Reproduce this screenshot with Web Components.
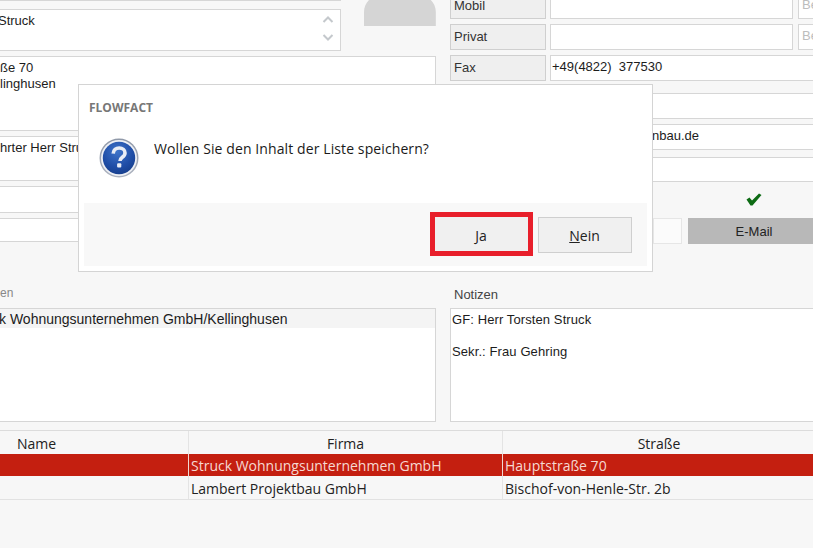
<!DOCTYPE html>
<html lang="de">
<head>
<meta charset="utf-8">
<title>FLOWFACT</title>
<style>
  html, body { margin: 0; padding: 0; background: #f7f7f7; overflow: hidden; }
</style>
</head>
<body>
<ff-app></ff-app>
<script>
/* single text box, used for all the inputs of the form */
class FfField extends HTMLElement {
  constructor() {
    super();
    this.attachShadow({ mode: "open" }).innerHTML = `
      <style>
        :host {
          display: block;
          box-sizing: border-box;
          background: #fff;
          border: 1px solid #d6d6d6;
          font: 13px/16px "Liberation Sans", Arial, sans-serif;
          color: #1c1c1c;
          padding: 3px 1px 1px;
          overflow: hidden;
        }
        slot { white-space: pre; }
        :host([hint]) { color: #bdbdbd; padding-left: 3px; }
      </style>
      <slot></slot>`;
  }
}

class FfLabel extends HTMLElement {
  constructor() {
    super();
    this.attachShadow({ mode: "open" }).innerHTML = `
      <style>
        :host {
          display: block;
          box-sizing: border-box;
          background: #efefef;
          border: 1px solid #cfcfcf;
          font: 13px/23px "Liberation Sans", Arial, sans-serif;
          color: #333;
          padding-left: 3px;
        }
      </style>
      <slot></slot>`;
  }
}

/* label + number box + small note box on the right */
class FfPhoneRow extends HTMLElement {
  constructor() {
    super();
    this.attachShadow({ mode: "open" }).innerHTML = `
      <style>
        :host {
          display: grid;
          grid-template-columns: 96px 243px 40px;
          column-gap: 4px;
          height: 26px;
        }
        .note { margin-left: 1px; }
        :host([wide]) .num { grid-column: 2 / 4; }
        :host([wide]) .note { display: none; }
      </style>
      <ff-label><slot name="label"></slot></ff-label>
      <ff-field class="num"><slot name="value"></slot></ff-field>
      <ff-field class="note" hint>Be</ff-field>`;
  }
}

class FfDialog extends HTMLElement {
  constructor() {
    super();
    this.attachShadow({ mode: "open" }).innerHTML = `
      <style>
        :host {
          position: absolute;
          left: 78px;
          top: 84px;
          box-sizing: border-box;
          width: 575px;
          height: 188px;
          display: flex;
          flex-direction: column;
          background: #fff;
          border: 1px solid #d4d4d4;
          padding: 0 5px 5px;
        }
        .title {
          font: 700 12px/16px "Open Sans", sans-serif;
          color: #777;
          padding: 15px 0 0 5px;
        }
        .body {
          flex: 1;
          display: flex;
          gap: 15px;
          padding: 22px 0 0 15px;
          font: 14px/20px "Open Sans", sans-serif;
          color: #1a1a1a;
        }
        .msg { padding-top: 1px; letter-spacing: .1px; }
        .foot {
          height: 63px;
          background: #f8f8f8;
          display: flex;
          justify-content: flex-end;
          align-items: flex-start;
          gap: 10px;
          box-sizing: border-box;
          padding: 14px 15px 0 0;
        }
        svg { display: block; }
      </style>
      <div class="title"><slot name="title"></slot></div>
      <div class="body">
        <svg width="40" height="40" viewBox="0 0 40 40">
          <defs>
            <radialGradient id="q" cx=".45" cy=".3" r=".8">
              <stop offset="0" stop-color="#3f74c9"/>
              <stop offset=".6" stop-color="#1f4da6"/>
              <stop offset="1" stop-color="#143a85"/>
            </radialGradient>
            <linearGradient id="r" x1="0" y1="0" x2="0" y2="1">
              <stop offset="0" stop-color="#8f98a8"/>
              <stop offset="1" stop-color="#aeb4c0"/>
            </linearGradient>
          </defs>
          <circle cx="20" cy="20" r="19.5" fill="url(#r)"/>
          <circle cx="20" cy="20" r="18" fill="#eef0f5"/>
          <circle cx="20" cy="20" r="16.2" fill="url(#q)"/>
          <path d="M14.2 15.6c.2-3.6 2.8-5.6 6-5.6 3.300 0 5.800 1.900 5.800 4.900 0 2.100-1.200 3.200-2.700 4.300-1.500 1.100-2.300 1.800-2.300 3.800" fill="none" stroke="#e9edf5" stroke-width="3.600"/>
          <rect x="18.100" y="25.300" width="4.200" height="4.200" rx="1" fill="#e9edf5"/>
        </svg>
        <div class="msg"><slot name="message"></slot></div>
      </div>
      <div class="foot"><slot name="buttons"></slot></div>`;
  }
}

class FfButton extends HTMLElement {
  constructor() {
    super();
    this.attachShadow({ mode: "open" }).innerHTML = `
      <style>
        :host {
          display: block;
          box-sizing: border-box;
          width: 94px;
          height: 36px;
          background: #f0f0f0;
          border: 1px solid #cfcfcf;
          font: 14px/35px "Open Sans", sans-serif;
          color: #222;
          text-align: center;
          padding-right: 1px;
        }
        :host([marked]) {
          width: 93px;
          height: 34px;
          border-color: transparent;
          outline: 5px solid #e81f2b;
        }
      </style>
      <slot></slot>`;
  }
}

class FfGrid extends HTMLElement {
  constructor() {
    super();
    this.attachShadow({ mode: "open" }).innerHTML = `
      <style>
        :host {
          display: block;
          border-top: 1px solid #dcdcdc;
          font: 14px/24px "Open Sans", sans-serif;
          color: #222;
        }
        .row {
          display: grid;
          grid-template-columns: 188px 314px 1fr;
          height: 22px;
        }
        .row > div { padding-left: 2px; border-left: 1px solid #e4e4e4; white-space: nowrap; overflow: hidden; }
        .row > div:first-child { border-left: 0; padding-left: 0; }
        .head { height: 23px; line-height: 25px; }
        .head > div { text-align: center; padding-left: 0; }
        .head > div:last-child { padding-left: 2px; }
        .head > div:first-child { text-align: left; padding-left: 17px; }
        .sel { background: #c41f10; color: #f6d9d2; height: 22px; }
        .sel > div { border-left-color: #f0d8d2; }
        .plain { height: 23px; border-bottom: 1px solid #e2e2e2; line-height: 26px; }
      </style>
      <div class="row head"><div>Name</div><div>Firma</div><div>Straße</div></div>
      <div class="row sel"><div></div><div>Struck Wohnungsunternehmen GmbH</div><div>Hauptstraße 70</div></div>
      <div class="row plain"><div></div><div>Lambert Projektbau GmbH</div><div>Bischof-von-Henle-Str. 2b</div></div>`;
  }
}

class FfApp extends HTMLElement {
  constructor() {
    super();
    this.attachShadow({ mode: "open" }).innerHTML = `
      <style>
        :host {
          display: block;
          position: relative;
          width: 813px;
          height: 548px;
          overflow: hidden;
          background: #f7f7f7;
        }
        .form {
          display: grid;
          grid-template-columns: 436px 380px;
          column-gap: 14px;
          height: 438px;
          align-items: start;
          margin-top: -8px;
        }
        .left, .right { display: flex; flex-direction: column; height: 438px; }
        .left { margin-left: -2px; }

        .top { display: flex; gap: 23px; height: 59px; }
        .top-fields { width: 344px; display: flex; flex-direction: column; gap: 8px; }
        .combo { height: 9px; display: flex; }
        .combo ff-field { padding: 0; }
        .combo .a { flex: 1; }
        .combo .b { width: 22px; background: #f0f0f0; margin-left: -1px; }
        .memo { height: 42px; position: relative; text-indent: -2px; }
        .arrows { position: absolute; right: 6px; top: 6px; display: flex; flex-direction: column; gap: 11px; }
        .arrows svg { display: block; }
        .avatar { width: 72px; height: 34px; display: block; }

        .addr { height: 75px; margin-top: 5px; }
        .salut { height: 45px; margin-top: 5px; }
        .f1 { height: 27px; margin-top: 5px; }
        .f2 { height: 24px; margin-top: 5px; }
        .cap { font: 12px/16px "Liberation Sans", Arial, sans-serif; color: #666; }
        .left .cap { margin-top: 43px; margin-left: 2px; color: #888; }
        .list { height: 114px; margin-top: 7px; padding: 0; font: 14px/18px "Liberation Sans", Arial, sans-serif; }
        .list div { background: #f4f4f4; height: 19px; line-height: 21px; }

        .phones { display: flex; flex-direction: column; gap: 5px; margin-top: 1px; }
        .r1 { height: 26px; margin-top: 12px; }
        .r2 { height: 26px; margin-top: 5px; padding-left: 201px; }
        .mailbox { height: 25px; margin-top: 7px; }
        .actions { display: grid; grid-template-columns: 29px 132px; column-gap: 6px; margin: 11px 0 0 203px; }
        .check { grid-column: 2; height: 25px; display: flex; justify-content: center; }
        .box { height: 26px; border-color: #e6e6e6; background: #fbfbfb; }
        .mail {
          background: #b8b8b8;
          height: 26px;
          font: 13px/27px "Liberation Sans", Arial, sans-serif;
          color: #222;
          text-align: center;
        }
        .right .cap { margin-top: 43px; margin-left: 4px; font-size: 13px; color: #444; }
        .notes { height: 114px; margin-top: 5px; letter-spacing: .1px; }
      </style>
      <div class="form">
        <div class="left">
          <div class="top">
            <div class="top-fields">
              <div class="combo"><ff-field class="a"></ff-field><ff-field class="b"></ff-field></div>
              <ff-field class="memo">Struck<div class="arrows"><svg width="12" height="7" viewBox="0 0 12 7"><path d="M1.500 6L6 1.500 10.500 6" fill="none" stroke="#c4c8cc" stroke-width="2"/></svg><svg width="12" height="7" viewBox="0 0 12 7"><path d="M1.500 1L6 5.500 10.500 1" fill="none" stroke="#c4c8cc" stroke-width="2"/></svg></div></ff-field>
            </div>
            <svg class="avatar" viewBox="0 0 72 34"><path d="M0 34V20C0 15 2 11 5 8C6 7 7 6 8 5H64C65 6 66 7 67 8C70 11 72 15 72 20V34Z" fill="#d5d5d5"/></svg>
          </div>
          <ff-field class="addr">ße 70
linghusen</ff-field>
          <ff-field class="salut">hrter Herr Stru</ff-field>
          <ff-field class="f1"></ff-field>
          <ff-field class="f2"></ff-field>
          <div class="cap">en</div>
          <ff-field class="list"><div>k Wohnungsunternehmen GmbH/Kellinghusen</div></ff-field>
        </div>
        <div class="right">
          <div class="phones">
            <ff-phone-row><span slot="label">Mobil</span></ff-phone-row>
            <ff-phone-row><span slot="label">Privat</span></ff-phone-row>
            <ff-phone-row wide><span slot="label">Fax</span><span slot="value">+49(4822)  377530</span></ff-phone-row>
          </div>
          <ff-field class="r1"></ff-field>
          <ff-field class="r2">nbau.de</ff-field>
          <ff-field class="mailbox"></ff-field>
          <div class="actions">
            <div></div>
            <div class="check"><svg width="16" height="13" viewBox="0 0 16 13"><path d="M0.500 6.500L3.500 4.500 6 7.500 13 0.500 15.500 2 6.500 12.500 4.500 12.500Z" fill="#0d6b14"/></svg></div>
            <ff-field class="box"></ff-field>
            <div class="mail">E-Mail</div>
          </div>
          <div class="cap">Notizen</div>
          <ff-field class="notes">GF: Herr Torsten Struck

Sekr.: Frau Gehring</ff-field>
        </div>
      </div>
      <ff-grid></ff-grid>
      <ff-dialog>
        <span slot="title">FLOWFACT</span>
        <span slot="message">Wollen Sie den Inhalt der Liste speichern?</span>
        <ff-button slot="buttons" marked><u>J</u>a</ff-button>
        <ff-button slot="buttons"><u>N</u>ein</ff-button>
      </ff-dialog>`;
  }
}

customElements.define("ff-field", FfField);
customElements.define("ff-label", FfLabel);
customElements.define("ff-phone-row", FfPhoneRow);
customElements.define("ff-dialog", FfDialog);
customElements.define("ff-button", FfButton);
customElements.define("ff-grid", FfGrid);
customElements.define("ff-app", FfApp);
</script>
</body>
</html>
